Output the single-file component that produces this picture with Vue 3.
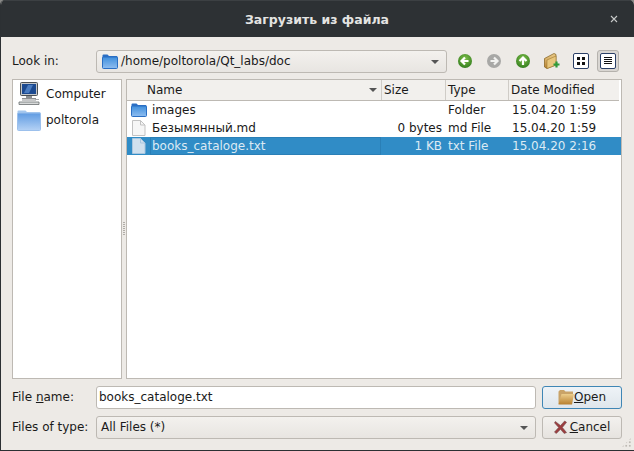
<script setup>
const places = [
  { name: 'Computer', icon: 'computer' },
  { name: 'poltorola', icon: 'folder' }
];

const files = [
  { name: 'images', size: '', type: 'Folder', date: '15.04.20 1:59', icon: 'folder' },
  { name: 'Безымянный.md', size: '0 bytes', type: 'md File', date: '15.04.20 1:59', icon: 'file' },
  { name: 'books_cataloge.txt', size: '1 KB', type: 'txt File', date: '15.04.20 2:16', icon: 'file', selected: true }
];
</script>

<template>
  <div class="window">
    <svg width="0" height="0" class="defs">
      <defs>
        <linearGradient id="blueFolder" x1="0" y1="0" x2="0" y2="1">
          <stop offset="0" stop-color="#3f8fdc" />
          <stop offset="1" stop-color="#8fbdf0" />
        </linearGradient>
        <linearGradient id="paleFolder" x1="0" y1="0" x2="0" y2="1">
          <stop offset="0" stop-color="#5f9be2" />
          <stop offset="1" stop-color="#b5d2f5" />
        </linearGradient>
        <linearGradient id="tanFolder" x1="0" y1="0" x2="0" y2="1">
          <stop offset="0" stop-color="#eccd8c" />
          <stop offset="1" stop-color="#b8802f" />
        </linearGradient>
        <radialGradient id="greenBall" cx="0.5" cy="0.35" r="0.7">
          <stop offset="0" stop-color="#7fc04a" />
          <stop offset="1" stop-color="#2f7a1c" />
        </radialGradient>
      </defs>
    </svg>

    <header class="titlebar">
      <span class="title">Загрузить из файла</span>
      <svg class="close" width="8" height="8" viewBox="0 0 8 8">
        <path d="M1 1l6 6M7 1l-6 6" stroke="#c6c8c8" stroke-width="1.1" fill="none" />
      </svg>
    </header>

    <div class="content">
      <div class="look-row">
        <label class="label">Look in:</label>
        <div class="combo path-combo">
          <svg class="combo-icon" width="16" height="15" viewBox="0 0 16 15">
            <path d="M.5 3V1.500a1 1 0 0 1 1-1h4L7 2h7.500a1 1 0 0 1 1 1v1H.5z" fill="#2a6fc4" />
            <rect x=".5" y="3" width="15" height="11.500" rx="1" fill="url(#blueFolder)" stroke="#2a6fc4" />
          </svg>
          <span class="combo-text">/home/poltorola/Qt_labs/doc</span>
          <span class="arrow"></span>
        </div>
        <div class="tools">
          <svg class="tool" width="16" height="16" viewBox="0 0 16 16">
            <circle cx="8" cy="8" r="7" fill="url(#greenBall)" />
            <path d="M11.500 8H5M8 4.500L4.500 8 8 11.500" stroke="#fff" stroke-width="2.200" fill="none" />
          </svg>
          <svg class="tool" width="16" height="16" viewBox="0 0 16 16">
            <circle cx="8" cy="8" r="7" fill="#a8a8a6" />
            <path d="M4.500 8H11M8 4.500L11.500 8 8 11.500" stroke="#f2f2f0" stroke-width="2.200" fill="none" />
          </svg>
          <svg class="tool" width="16" height="16" viewBox="0 0 16 16">
            <circle cx="8" cy="8" r="7" fill="url(#greenBall)" />
            <path d="M8 12V5.500M4.500 8L8 4.500 11.500 8" stroke="#fff" stroke-width="2.200" fill="none" />
          </svg>
          <svg class="tool folder-new" width="16" height="16" viewBox="0 0 16 16">
            <path d="M.5 5.500L10 .5l2 1V12L3 15.500.5 14z" fill="url(#tanFolder)" stroke="#8a6a2a" stroke-width=".8" />
            <path d="M3 7l9-4v9l-9 3.500z" fill="#e8c67c" stroke="#a07c34" stroke-width=".6" />
            <path d="M12.500 8.500v6M9.500 11.500h6" stroke="#2f9a3a" stroke-width="2.200" />
          </svg>
          <span class="view-btn">
            <svg width="16" height="16" viewBox="0 0 16 16">
              <rect x=".5" y=".5" width="15" height="15" rx="1.500" fill="#fff" stroke="#2a3f66" />
              <path d="M4 4h3v3H4zM9 4h3v3H9zM4 9h3v3H4zM9 9h3v3H9z" fill="#111" />
            </svg>
          </span>
          <span class="view-btn active">
            <svg width="16" height="16" viewBox="0 0 16 16">
              <rect x=".5" y=".5" width="15" height="15" rx="1.500" fill="#fff" stroke="#2a3f66" />
              <path d="M4 4.500h8M4 6.500h8M4 8.500h8M4 10.500h8" stroke="#111" stroke-width="1" />
            </svg>
          </span>
        </div>
      </div>

      <div class="panes">
        <aside class="sidebar">
          <div v-for="place in places" :key="place.name" class="place" :class="place.icon">
            <svg v-if="place.icon === 'computer'" width="24" height="24" viewBox="0 0 24 24">
              <rect x="3.500" y=".5" width="17" height="13" rx="1" fill="#c4c7ca" stroke="#4c5154" />
              <rect x="5" y="2" width="14" height="10" fill="#1c4a90" />
              <path d="M7 11l4-8h5l-4 8z" fill="#4a7cc0" />
              <rect x="9" y="14" width="6" height="2" fill="#8b8f92" />
              <path d="M5 16.500h14M5 18h14" stroke="#8e9092" />
              <path d="M2 20h20v2.500H2z" fill="#d8dada" stroke="#6a6e70" stroke-width=".8" />
              <path d="M18 17.500h4" stroke="#a8aaac" stroke-width="1.200" />
            </svg>
            <svg v-else width="24" height="21" viewBox="0 0 24 21">
              <path d="M.5 3V1.500a1 1 0 0 1 1-1h7l1.500 1.500h12.500a1 1 0 0 1 1 1V4H.5z" fill="#a4c7ee" />
              <rect x=".5" y="3" width="23" height="17.500" rx="1" fill="url(#paleFolder)" stroke="#9cc0ec" />
            </svg>
            <span>{{ place.name }}</span>
          </div>
        </aside>

        <section class="files">
          <div class="cols header">
            <div class="head name-head">Name<span class="sort"></span></div>
            <div class="head">Size</div>
            <div class="head">Type</div>
            <div class="head">Date Modified</div>
          </div>
          <div
            v-for="file in files"
            :key="file.name"
            class="cols row"
            :class="{ selected: file.selected }"
          >
            <div class="cell name-cell">
              <svg v-if="file.icon === 'folder'" width="16" height="14" viewBox="0 0 16 14">
                <path d="M.5 3V1.500a1 1 0 0 1 1-1h4L7 2h7.500a1 1 0 0 1 1 1v1H.5z" fill="#2a6fc4" />
                <rect x=".5" y="3" width="15" height="10.500" rx="1" fill="url(#blueFolder)" stroke="#2a6fc4" />
              </svg>
              <svg v-else width="16" height="16" viewBox="0 0 16 16">
                <path
                  d="M1.500.5H9.500L14 5v10.500H1.500z"
                  :fill="file.selected ? '#cfe0ee' : '#f6f6f6'"
                  :stroke="file.selected ? '#a9c6df' : '#c2c2c2'"
                />
                <path d="M9.500.5V5H14" fill="none" :stroke="file.selected ? '#a9c6df' : '#c2c2c2'" />
              </svg>
              <span class="file-name">{{ file.name }}</span>
            </div>
            <div class="cell size-cell">{{ file.size }}</div>
            <div class="cell type-cell">{{ file.type }}</div>
            <div class="cell date-cell">{{ file.date }}</div>
          </div>
        </section>
        <div class="grip"></div>
      </div>

      <div class="form">
        <label class="label">File <u>n</u>ame:</label>
        <input class="name-input" value="books_cataloge.txt" />
        <button class="btn default">
          <svg width="16" height="16" viewBox="0 0 16 16">
            <path d="M.5 15V2.500L2 1h4l1.500 1.500H15V5H5L3 15z" fill="#c9a368" />
            <path d="M.5 15.500L3.500 5H16l-2 10.500z" fill="url(#tanFolder)" />
          </svg>
          <span class="open-text"><u>O</u>pen</span>
        </button>
        <label class="label">Files of type:</label>
        <div class="combo type-combo">
          <span class="combo-text">All Files (*)</span>
          <span class="arrow"></span>
        </div>
        <button class="btn">
          <svg class="cancel-icon" width="13" height="14" viewBox="0 0 14 15">
            <path d="M1.500 1.500L7 6l4.500-5 2 1.500L9 8l4.500 5.500-2.500 1L7 10l-4.500 4.500L.5 13 5 8 .5 3z" fill="#9c3d3f" stroke="#6e4a4a" stroke-width=".6" />
          </svg>
          <span><u>C</u>ancel</span>
        </button>
      </div>
    </div>
    <div class="size-grip"></div>
  </div>
</template>

<style scoped>
.window {
  width: 634px;
  height: 451px;
  display: flex;
  flex-direction: column;
  overflow: hidden;
  position: relative;
  background: #edeae6;
  border-radius: 5px 5px 0 0;
  font-family: "DejaVu Sans", sans-serif;
  font-size: 12px;
  color: #1a1a1a;
  box-sizing: border-box;
  border-left: 1px solid #2c3033;
  border-bottom: 1px solid #2c3033;
}

.defs {
  position: absolute;
}

.titlebar {
  height: 37px;
  flex: none;
  display: flex;
  align-items: center;
  justify-content: center;
  position: relative;
  box-sizing: border-box;
  padding-top: 1px;
  background: #2d3134;
  border-top: 1px solid #3c4043;
  margin-left: -1px;
}

.title {
  font-weight: bold;
  color: #e4e4e2;
  font-size: 12.500px;
}

.close {
  position: absolute;
  right: 16px;
  top: 14px;
}

.content {
  flex: 1;
  display: flex;
  flex-direction: column;
  padding: 13px 12px 0 11px;
  min-height: 0;
}

.look-row {
  display: flex;
  align-items: center;
  height: 22px;
  flex: none;
}

.label {
  width: 84px;
  flex: none;
}

.combo {
  display: flex;
  align-items: center;
  box-sizing: border-box;
  border: 1px solid #bdb9b3;
  border-radius: 3px;
  background: linear-gradient(#f3f1ee, #e8e5e1);
  position: relative;
}

.path-combo {
  width: 351px;
  height: 23px;
  padding-left: 5px;
}

.combo-icon {
  margin-right: 3px;
}

.combo-text {
  white-space: nowrap;
}

.arrow {
  position: absolute;
  right: 7px;
  top: 9px;
  width: 0;
  height: 0;
  border-left: 4px solid transparent;
  border-right: 4px solid transparent;
  border-top: 4px solid #555;
}

.tools {
  display: flex;
  align-items: center;
  margin-left: 10px;
}

.tool {
  margin-right: 13px;
}

.folder-new {
  margin-right: 12px;
}

.view-btn {
  width: 22px;
  height: 22px;
  display: flex;
  align-items: center;
  justify-content: center;
  box-sizing: border-box;
  margin-right: 2px;
  border: 1px solid transparent;
  border-radius: 3px;
  margin-left: -2px;
}

.view-btn.active {
  background: #d9d6d2;
  border-color: #b5b2ad;
  margin-left: 3px;
}

.panes {
  display: grid;
  grid-template-columns: 110px 496px;
  gap: 4px;
  height: 300px;
  margin-top: 7px;
  flex: none;
  position: relative;
}

.sidebar,
.files {
  box-sizing: border-box;
  background: #fff;
  border: 1px solid #bdb9b3;
}

.place {
  display: flex;
  align-items: center;
  gap: 5px;
  padding-left: 4px;
  height: 28px;
}

.place.folder {
  height: 24px;
}

.grip {
  position: absolute;
  left: 111px;
  top: 143px;
  width: 2px;
  height: 14px;
  background: repeating-linear-gradient(#b0ada8 0 1px, transparent 1px 2px);
}

.cols {
  display: grid;
  grid-template-columns: 254px 64px 63px 112px;
}

.header {
  height: 20px;
  background: #f2f0ed;
  border-bottom: 1px solid #bdb9b3;
  margin-right: 2px;
}

.head {
  position: relative;
  box-sizing: border-box;
  padding-left: 2px;
  line-height: 20px;
  border-left: 1px solid #cfccc7;
}

.head:first-child {
  border-left: none;
}

.name-head {
  padding-left: 20px;
}

.sort {
  position: absolute;
  right: 4px;
  top: 8px;
  border-left: 4px solid transparent;
  border-right: 4px solid transparent;
  border-top: 4px solid #555;
}

.row {
  height: 18px;
  line-height: 18px;
}

.cell {
  box-sizing: border-box;
  white-space: nowrap;
}

.name-cell {
  display: flex;
  align-items: center;
  padding-left: 4px;
  gap: 3px;
}

.file-name {
  flex: 1;
  box-sizing: border-box;
  height: 18px;
  line-height: 16px;
  padding-left: 1px;
  border: 1px solid transparent;
}

.size-cell {
  text-align: right;
  padding-right: 3px;
}

.type-cell {
  padding-left: 3px;
}

.date-cell {
  padding-left: 4px;
}

.selected {
  background: #308cc6;
  color: #dceaf4;
}

.selected .file-name {
  border-color: #2a7fb6;
}

.form {
  display: grid;
  grid-template-columns: 84px 440px 86px;
  grid-auto-rows: 22px;
  row-gap: 8px;
  margin-top: 7px;
  align-items: center;
}

.form .btn {
  margin-left: 6px;
  width: 80px;
}

.name-input {
  box-sizing: border-box;
  width: 440px;
  height: 23px;
  border: 1px solid #bdb9b3;
  border-radius: 3px;
  background: #fff;
  padding: 0 2px;
  font: inherit;
  color: inherit;
  outline: none;
}

.type-combo {
  height: 23px;
  padding-left: 4px;
}

.btn {
  box-sizing: border-box;
  height: 23px;
  display: flex;
  align-items: center;
  justify-content: center;
  gap: 1px;
  padding: 0;
  border: 1px solid #bdb9b3;
  border-radius: 3px;
  background: linear-gradient(#f3f1ee, #e6e3df);
  font: inherit;
  color: inherit;
}

.open-text {
  margin-left: -1px;
}

.cancel-icon {
  margin-right: 2px;
}

.btn.default {
  border-color: #3f86b5;
  background: linear-gradient(#eef3f7, #dfe6ec);
}

.size-grip {
  position: absolute;
  right: 2px;
  bottom: 2px;
  width: 11px;
  height: 11px;
  background: radial-gradient(circle, #bdb9b3 0.8px, transparent 1px) 0 0 / 3.500px 3.500px;
  clip-path: polygon(100% 0, 100% 100%, 0 100%);
}
</style>

<style>
html,
body {
  margin: 0;
  background: #8a8a88;
}
</style>
